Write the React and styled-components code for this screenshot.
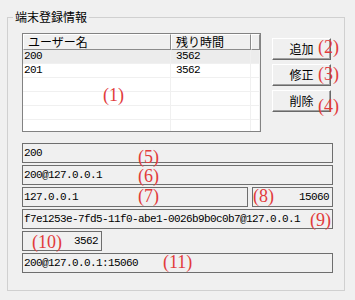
import React from "react";
import styled, { createGlobalStyle } from "styled-components";

const GlobalStyle = createGlobalStyle`
  body {
    margin: 0;
    background: #f0f0f0;
  }
`;

const users = [
  { name: "200", remain: "3562" },
  { name: "201", remain: "3562" },
];

const notes = [
  { label: "(1)", x: 103, y: 85 },
  { label: "(2)", x: 318, y: 37 },
  { label: "(3)", x: 318, y: 64 },
  { label: "(4)", x: 318, y: 96 },
  { label: "(5)", x: 138, y: 147 },
  { label: "(6)", x: 138, y: 166 },
  { label: "(7)", x: 138, y: 186 },
  { label: "(8)", x: 253, y: 186 },
  { label: "(9)", x: 310, y: 210 },
  { label: "(10)", x: 32, y: 232 },
  { label: "(11)", x: 163, y: 252 },
];

function App() {
  const blank = Array.from({ length: 5 - users.length + 1 });
  return (
    <Window>
      <GlobalStyle />
      <Group>
        <Legend>端末登録情報</Legend>
        <Body>
          <TopRow>
            <List>
              <HeaderRow>
                <HeadCell>ユーザー名</HeadCell>
                <HeadCell>残り時間</HeadCell>
                <HeadCell />
              </HeaderRow>
              {users.map((u, i) => (
                <Row key={u.name} $selected={i === 0}>
                  <Cell $pad={1}>{u.name}</Cell>
                  <Cell $pad={5}>{u.remain}</Cell>
                  <Cell />
                </Row>
              ))}
              {blank.map((_, i) => (
                <Row key={"b" + i}>
                  <Cell />
                  <Cell />
                  <Cell />
                </Row>
              ))}
            </List>
            <Buttons>
              <Button>追加</Button>
              <Button>修正</Button>
              <Button>削除</Button>
            </Buttons>
          </TopRow>
          <Fields>
            <Field>200</Field>
            <Field>200@127.0.0.1</Field>
            <FieldRow>
              <Field $width={226}>127.0.0.1</Field>
              <Field $width={81} $right>15060</Field>
            </FieldRow>
            <Field>f7e1253e-7fd5-11f0-abe1-0026b9b0c0b7@127.0.0.1</Field>
            <Field $width={80} $right>3562</Field>
            <Field>200@127.0.0.1:15060</Field>
          </Fields>
        </Body>
      </Group>
      {notes.map((n) => (
        <Note key={n.label} $x={n.x} $y={n.y}>
          {n.label}
        </Note>
      ))}
    </Window>
  );
}

export default App;

const Window = styled.div`
  position: relative;
  width: 355px;
  height: 300px;
  overflow: hidden;
  background: #f0f0f0;
  font-family: "Noto Sans CJK JP", sans-serif;
  font-size: 12px;
  color: #000;
`;

const Group = styled.fieldset`
  box-sizing: border-box;
  width: 338px;
  height: 282px;
  margin: 9px 0 0 7px;
  padding: 0;
  border: 1px solid #d0d0d0;
  min-inline-size: 0;
`;

const Legend = styled.legend`
  margin-left: 5px;
  padding: 0 2px;
  font-size: 12px;
  line-height: 16px;
`;

const Body = styled.div`
  display: flex;
  flex-direction: column;
  padding: 8px 0 0 14px;
`;

const TopRow = styled.div`
  display: flex;
  align-items: flex-start;
  gap: 11px;
`;

const List = styled.div`
  box-sizing: border-box;
  width: 239px;
  height: 99px;
  overflow: hidden;
  background: #fff;
  border: 1px solid #828282;
`;

const HeaderRow = styled.div`
  display: grid;
  grid-template-columns: 148px 80px 1fr;
  height: 16px;
`;

const HeadCell = styled.div`
  box-sizing: border-box;
  height: 16px;
  padding-left: 4px;
  background: #f0f0f0;
  border: 1px solid;
  border-color: #fff #8c8c8c #8c8c8c #fff;
  font-size: 12px;
  line-height: 13px;
  white-space: nowrap;
  overflow: hidden;
`;

const Row = styled.div`
  display: grid;
  grid-template-columns: 148px 80px 1fr;
  height: 14px;
  box-sizing: border-box;
  border-bottom: 1px solid #f0f0f0;
  background: ${(p) => (p.$selected ? "#ececec" : "#fff")};
`;

const Cell = styled.div`
  box-sizing: border-box;
  padding-left: ${(p) => p.$pad || 0}px;
  border-right: 1px solid #f0f0f0;
  font-family: "Liberation Mono", monospace;
  font-size: 11px;
  letter-spacing: -0.6px;
  line-height: 13px;
`;

const Buttons = styled.div`
  display: flex;
  flex-direction: column;
  gap: 4px;
  margin-top: 5px;
`;

const Button = styled.button`
  box-sizing: border-box;
  width: 59px;
  height: 22px;
  padding: 0;
  background: #f0f0f0;
  border: 1px solid;
  border-color: #fff #696969 #696969 #fff;
  box-shadow: inset -1px -1px 0 #a0a0a0;
  font-family: "Noto Sans CJK JP", sans-serif;
  font-size: 12px;
  line-height: 18px;
  color: #000;
`;

const Fields = styled.div`
  display: flex;
  flex-direction: column;
  gap: 2px;
  width: 311px;
  margin-top: 11px;
`;

const FieldRow = styled.div`
  display: flex;
  gap: 4px;
`;

const Field = styled.div`
  box-sizing: border-box;
  width: ${(p) => (p.$width ? p.$width + "px" : "100%")};
  height: 20px;
  padding: 2px 3px 0 1px;
  border: 1px solid #6e6e6e;
  background: #f0f0f0;
  text-align: ${(p) => (p.$right ? "right" : "left")};
  font-family: "Liberation Mono", monospace;
  font-size: 11px;
  letter-spacing: -0.6px;
  line-height: 14px;
  white-space: nowrap;
  overflow: hidden;
`;

const Note = styled.span`
  position: absolute;
  left: ${(p) => p.$x}px;
  top: ${(p) => p.$y}px;
  font-family: "Liberation Serif", serif;
  font-size: 18px;
  line-height: 20px;
  color: #e23b3b;
  pointer-events: none;
`;
